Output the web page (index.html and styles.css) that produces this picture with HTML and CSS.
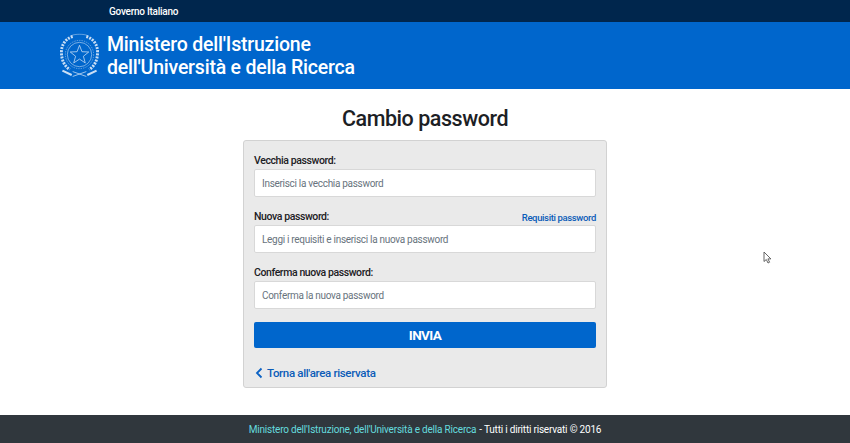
FILE: index.html
```html
<!DOCTYPE html>
<html lang="it">
<head>
<meta charset="utf-8">
<title>Cambio password</title>
<link rel="stylesheet" href="styles.css">
</head>
<body>
<div class="page">
  <div class="topbar"><a class="gov" href="#">Governo Italiano</a></div>
  <header class="brand">
    <svg class="emblem" viewBox="0 0 40 46" width="39" height="45" fill="none" stroke="#c9def5" aria-hidden="true">
      <path stroke-width="3" stroke-dasharray="2 1.200" d="M13 3.500C5 6 1 13 1.500 21C2 29 5 34 10 37.500"/>
      <path stroke-width="3" stroke-dasharray="2 1.200" d="M27 3.500C35 6 39 13 38.500 21C38 29 35 34 30 37.500"/>
      <path stroke-width=".5" d="M12 2.500C15 .8 25 .8 28 2.500"/>
      <circle cx="20" cy="22" r="14.500" stroke-width=".5" stroke-dasharray="1.400 1.100"/>
      <circle cx="20" cy="22" r="12.500" stroke-width=".6"/>
      <path stroke-width=".8" d="M20 12.500l2.500 6.600 7 .3-5.500 4.400 1.900 6.800-5.900-3.900-5.900 3.900 1.900-6.800-5.500-4.400 7-.3z"/>
      <path stroke-width="2.200" d="M2.500 38.500L12 43M37.500 38.500L28 43"/>
      <path stroke-width=".8" d="M13 44.500L27 39.500M27 44.500L13 39.500"/>
    </svg>
    <div class="brand-name">Ministero dell'Istruzione<br>dell'Università e della Ricerca</div>
  </header>
  <main class="main">
    <h1 class="title">Cambio password</h1>
    <form class="card">
      <div class="field">
        <div class="label-row"><label class="label" for="a">Vecchia password:</label></div>
        <input class="input" id="a" type="password" placeholder="Inserisci la vecchia password">
      </div>
      <div class="field">
        <div class="label-row"><label class="label" for="b">Nuova password:</label><a class="req" href="#">Requisiti password</a></div>
        <input class="input" id="b" type="password" placeholder="Leggi i requisiti e inserisci la nuova password">
      </div>
      <div class="field">
        <div class="label-row"><label class="label" for="c">Conferma nuova password:</label></div>
        <input class="input" id="c" type="password" placeholder="Conferma la nuova password">
      </div>
      <button class="submit" type="button">INVIA</button>
      <a class="back" href="#">
        <svg class="chev" viewBox="0 0 8 12" width="8" height="12" fill="none" stroke="#0b62c4" stroke-width="1.800"><path d="M6.500 1.500L2 6l4.500 4.500"/></svg>
        Torna all'area riservata
      </a>
    </form>
  </main>
  <footer class="footer"><span class="foot-link">Ministero dell'Istruzione, dell'Università e della Ricerca</span> - Tutti i diritti riservati © 2016</footer>
</div>
<svg class="cursor" viewBox="0 0 10 14" width="10" height="14" aria-hidden="true"><path d="M1 1v9.500l2.300-2 1.700 3.500 1.600-.8-1.700-3.300h3z" fill="#fff" stroke="#555" stroke-width=".9"/></svg>
</body>
</html>
```

FILE: styles.css
```css
* { box-sizing: border-box; }
html, body { margin: 0; height: 100%; }
body { font-family: Roboto, "Noto Sans", sans-serif; background: #fff; color: #1c2024; position: relative; overflow: hidden; }
.page { display: flex; flex-direction: column; height: 443px; }
.topbar { height: 22px; background: #00264d; padding-left: 109px; display: flex; align-items: center; flex: none; }
.gov { color: #fff; font-size: 10px; font-weight: 500; text-decoration: none; letter-spacing: -.25px; }
.brand { height: 67px; background: #0066cc; display: flex; align-items: center; padding-left: 60px; gap: 8px; flex: none; }
.emblem { flex: none; }
.brand-name { color: #fff; font-size: 19.500px; line-height: 23px; font-weight: 500; letter-spacing: -.21px; }
.main { flex: 1; display: flex; flex-direction: column; align-items: center; }
.title { margin: 15px 0 6px; font-size: 21.500px; line-height: 30px; font-weight: 500; letter-spacing: -.45px; color: #1c2024; }
.card { width: 364px; height: 248px; background: #eaeaea; border: 1px solid #d2d2d2; border-radius: 3px; padding: 12px 10px 0; display: flex; flex-direction: column; }
.field { display: flex; flex-direction: column; margin-bottom: 12px; }
.label-row { display: flex; justify-content: space-between; align-items: flex-start; height: 16px; padding-top: 1px; }
.label { font-size: 10.500px; line-height: 14px; font-weight: 500; letter-spacing: -.4px; color: #1c2024; }
.req { align-self: flex-end; font-size: 9.500px; line-height: 14px; font-weight: 500; color: #0b5cb8; text-decoration: none; letter-spacing: -.36px; }
.input { width: 342px; height: 28px; border: 1px solid #d8d8d8; border-radius: 2px; background: #fff; padding: 0 7px; font-family: inherit; font-size: 10px; outline: none; }
.input::placeholder { color: #68737d; opacity: 1; letter-spacing: -.3px; }
.submit { height: 26px; width: 342px; border: 0; border-radius: 2px; background: #0066cc; color: #fff; font-family: inherit; font-size: 13.500px; font-weight: 700; letter-spacing: -.6px; margin-top: 1px; padding: 0; }
.back { display: flex; align-items: center; gap: 4px; margin-top: 17px; padding-left: 1px; font-size: 11.500px; line-height: 16px; font-weight: 500; letter-spacing: -.33px; color: #0b5cb8; text-decoration: none; }
.chev { flex: none; }
.footer { height: 28px; flex: none; background: #30373d; color: #fff; font-size: 10px; letter-spacing: -.2px; display: flex; align-items: center; justify-content: center; gap: .3em; }
.foot-link { color: #65dcdf; }
.cursor { position: absolute; left: 763px; top: 251px; }
```
